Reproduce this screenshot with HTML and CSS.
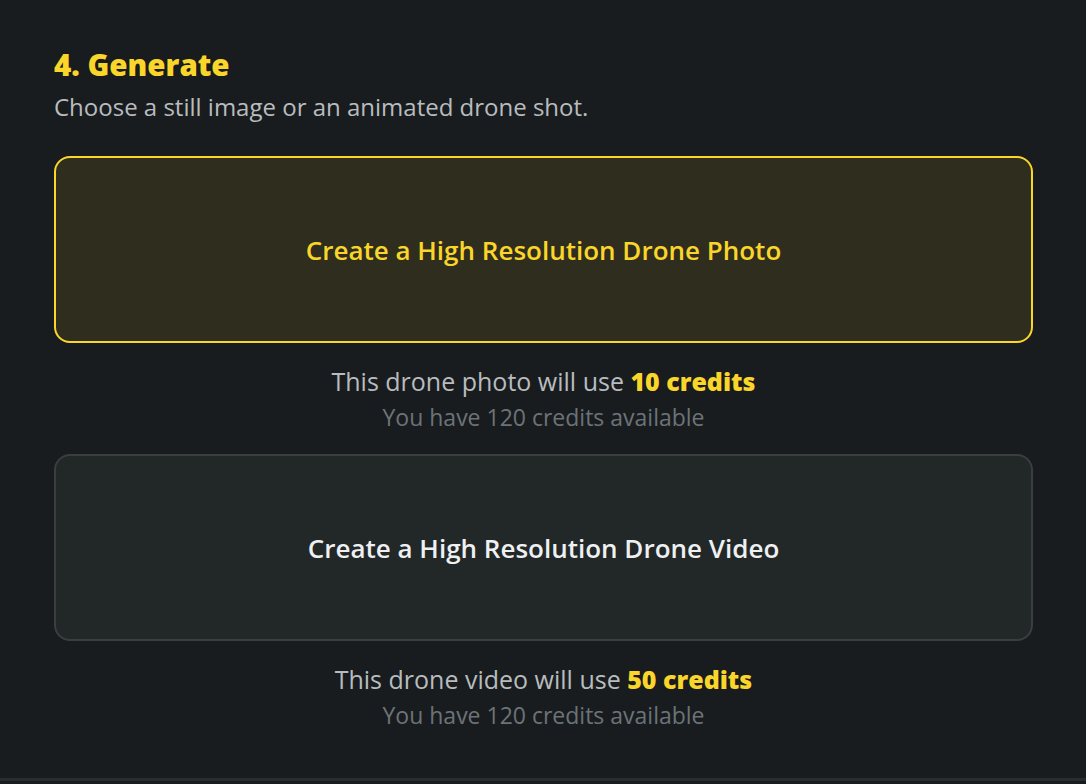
FILE: index.html
```html
<!DOCTYPE html>
<html lang="en">
<head>
<meta charset="utf-8">
<title>Generate</title>
<link rel="stylesheet" href="styles.css">
</head>
<body>
<main class="panel">
  <h2 class="title">4. Generate</h2>
  <p class="subtitle">Choose a still image or an animated drone shot.</p>

  <button class="option option--active" type="button">Create a High Resolution Drone Photo</button>
  <div class="cost">
    <p class="cost-line">This drone photo will use <strong>10 credits</strong></p>
    <p class="cost-avail">You have 120 credits available</p>
  </div>

  <button class="option" type="button">Create a High Resolution Drone Video</button>
  <div class="cost">
    <p class="cost-line">This drone video will use <strong>50 credits</strong></p>
    <p class="cost-avail">You have 120 credits available</p>
  </div>
</main>
</body>
</html>
```
FILE: styles.css
```css
html, body {
  margin: 0;
  padding: 0;
  height: 100%;
}
body {
  background: #191c1e;
  font-family: "Open Sans", "Noto Sans", sans-serif;
  color: #b8bcbf;
}
.panel {
  box-sizing: border-box;
  height: 781px;
  padding: 47px 53px 0 54px;
  border-bottom: 3px solid #2a2d2f;
  display: flex;
  flex-direction: column;
}
.title {
  margin: 0;
  font-size: 29.5px;
  line-height: 36px;
  font-weight: 800;
  color: #fad52a;
}
.subtitle {
  margin: 6px 0 31px;
  font-size: 24px;
  line-height: 36px;
  color: #b8bcbf;
}
.option {
  box-sizing: border-box;
  width: 100%;
  height: 187px;
  border-radius: 16px;
  border: 2px solid #3a3e40;
  background: #222728;
  color: #eef0f1;
  font-family: inherit;
  font-size: 26px;
  font-weight: 600;
  display: flex;
  align-items: center;
  justify-content: center;
  padding: 0;
}
.option--active {
  border-color: #fad52a;
  background: #2e2d1e;
  color: #fad52a;
}
.cost {
  text-align: center;
  padding: 20px 0 19px;
}
.cost p {
  margin: 0;
}
.cost-line {
  font-size: 25px;
  line-height: 36px;
  color: #b8bcbf;
}
.cost-line strong {
  font-weight: 800;
  color: #fad52a;
}
.cost-avail {
  font-size: 23px;
  line-height: 36px;
  color: #6c7378;
}
```
